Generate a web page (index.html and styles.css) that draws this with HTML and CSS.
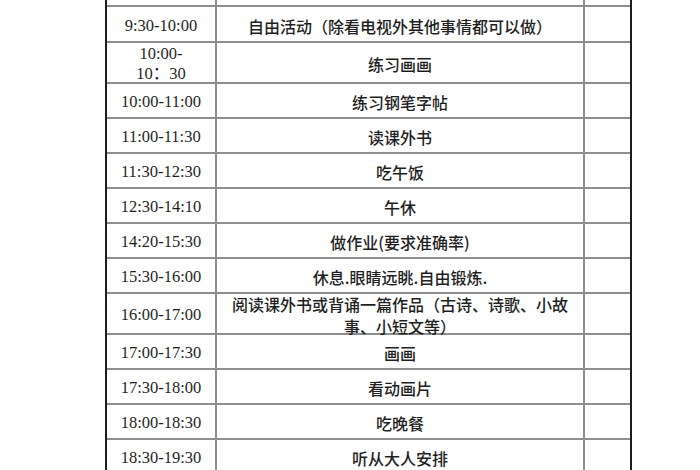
FILE: index.html
```html
<!DOCTYPE html>
<html lang="zh">
<head>
<meta charset="utf-8">
<title>作息时间表</title>
<link rel="stylesheet" href="styles.css">
</head>
<body>
<div class="page">
  <div class="sheet">
    <div class="cell time top"></div><div class="cell task top"></div><div class="cell note top"></div>

    <div class="cell time">9:30-10:00</div><div class="cell task">自由活动（除看电视外其他事情都可以做）</div><div class="cell note"></div>
    <div class="cell time">10:00-<br>10：30</div><div class="cell task">练习画画</div><div class="cell note"></div>
    <div class="cell time">10:00-11:00</div><div class="cell task">练习钢笔字帖</div><div class="cell note"></div>
    <div class="cell time">11:00-11:30</div><div class="cell task">读课外书</div><div class="cell note"></div>
    <div class="cell time">11:30-12:30</div><div class="cell task">吃午饭</div><div class="cell note"></div>
    <div class="cell time">12:30-14:10</div><div class="cell task">午休</div><div class="cell note"></div>
    <div class="cell time">14:20-15:30</div><div class="cell task">做作业(要求准确率)</div><div class="cell note"></div>
    <div class="cell time">15:30-16:00</div><div class="cell task">休息.眼睛远眺.自由锻炼.</div><div class="cell note"></div>
    <div class="cell time">16:00-17:00</div><div class="cell task">阅读课外书或背诵一篇作品（古诗、诗歌、小故事、小短文等）</div><div class="cell note"></div>
    <div class="cell time">17:00-17:30</div><div class="cell task">画画</div><div class="cell note"></div>
    <div class="cell time">17:30-18:00</div><div class="cell task">看动画片</div><div class="cell note"></div>
    <div class="cell time">18:00-18:30</div><div class="cell task">吃晚餐</div><div class="cell note"></div>
    <div class="cell time">18:30-19:30</div><div class="cell task">听从大人安排</div><div class="cell note"></div>
  </div>
</div>
</body>
</html>
```

FILE: styles.css
```css
html, body {
  margin: 0;
  padding: 0;
  background: #ffffff;
}
body {
  width: 700px;
  height: 470px;
  overflow: hidden;
}
.page {
  padding-left: 105px;
}
.sheet {
  width: 523px;
  margin-top: -15px;
  display: grid;
  grid-template-columns: 108px 366px 45px;
  grid-template-rows: 20px 34px 39px 33px 33px 33px 33px 33px 33px 39px 33px 33px 33px 33px;
  gap: 2px;
  background: #8e8e8e;
  border-left: 2px solid #1e1e1e;
  border-right: 2px solid #1e1e1e;
}
.cell {
  background: #ffffff;
  display: flex;
  align-items: center;
  justify-content: center;
  text-align: center;
  color: #1f1f1f;
  padding-top: 3px;
}
.time {
  font-family: "Liberation Serif", "Noto Sans CJK SC", serif;
  font-size: 16.5px;
  line-height: 20px;
}
.task {
  font-family: "Noto Sans CJK SC", sans-serif;
  font-size: 16px;
  font-weight: 500;
  line-height: 22px;
  padding-left: 10px;
  padding-right: 10px;
}
.note {
  background: #ffffff;
}
```
